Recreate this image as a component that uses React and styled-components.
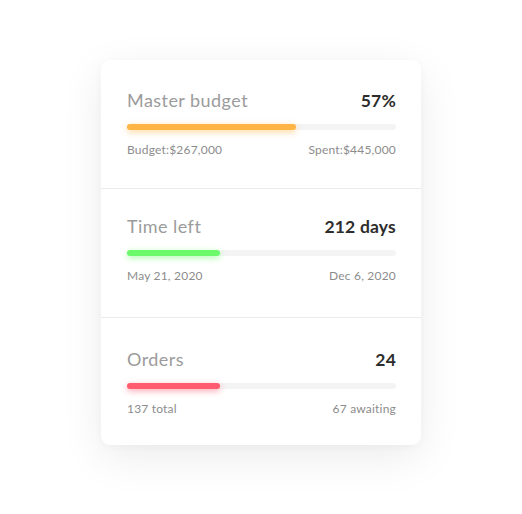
import React from "react";
import styled, { createGlobalStyle } from "styled-components";

const Global = createGlobalStyle`
  html, body { margin: 0; padding: 0; background: #ffffff; }
  body { font-family: Lato, "Noto Sans", sans-serif; -webkit-font-smoothing: antialiased; }
`;

const Page = styled.div`
  width: 522px;
  height: 514px;
  display: flex;
  justify-content: center;
  align-items: flex-start;
  padding-top: 60px;
  box-sizing: border-box;
`;

const Card = styled.div`
  width: 320px;
  background: #ffffff;
  border-radius: 9px;
  box-shadow: 0 12px 44px rgba(0, 0, 0, 0.08), 0 2px 10px rgba(0, 0, 0, 0.03);
  display: flex;
  flex-direction: column;
`;

const Section = styled.div`
  height: ${(p) => p.$h}px;
  box-sizing: border-box;
  padding: ${(p) => p.$pt}px 25px 0 26px;
  & + & {
    border-top: 1px solid #ebebeb;
  }
`;

const Head = styled.div`
  display: flex;
  justify-content: space-between;
  align-items: baseline;
  height: 22px;
  line-height: 22px;
`;

const Title = styled.span`
  font-size: 18px;
  color: #9b9b9b;
  letter-spacing: 0.45px;
`;

const Value = styled.span`
  font-size: 17.5px;
  font-weight: 700;
  color: #2d2d2d;
  letter-spacing: 0.2px;
`;

const Track = styled.div`
  margin-top: 13px;
  height: 6px;
  border-radius: 3px;
  background: #f4f4f4;
`;

const Fill = styled.div`
  height: 100%;
  border-radius: 3px;
  background: ${(p) => p.$color};
  box-shadow: 0 2px 6px ${(p) => p.$glow};
`;

const Foot = styled.div`
  margin-top: 13px;
  display: flex;
  justify-content: space-between;
  font-size: 12px;
  line-height: 14px;
  color: #8c8c8c;
  letter-spacing: 0.2px;
`;

const rows = [
  { h: 128, pt: 29, title: "Master budget", value: "57%", pct: 63, color: "#ffb545", glow: "rgba(255,181,69,0.55)", left: "Budget:$267,000", right: "Spent:$445,000" },
  { h: 129, pt: 26, title: "Time left", value: "212 days", pct: 34.5, color: "#6cfa6c", glow: "rgba(108,250,108,0.55)", left: "May 21, 2020", right: "Dec 6, 2020" },
  { h: 128, pt: 30, title: "Orders", value: "24", pct: 34.5, color: "#ff5c6f", glow: "rgba(255,92,111,0.55)", left: "137 total", right: "67 awaiting" },
];

export default function App() {
  return (
    <>
      <Global />
      <Page>
        <Card>
          {rows.map((r) => (
            <Section key={r.title} $h={r.h} $pt={r.pt}>
              <Head>
                <Title>{r.title}</Title>
                <Value>{r.value}</Value>
              </Head>
              <Track>
                <Fill $color={r.color} $glow={r.glow} style={{ width: `${r.pct}%` }} />
              </Track>
              <Foot>
                <span>{r.left}</span>
                <span>{r.right}</span>
              </Foot>
            </Section>
          ))}
        </Card>
      </Page>
    </>
  );
}
